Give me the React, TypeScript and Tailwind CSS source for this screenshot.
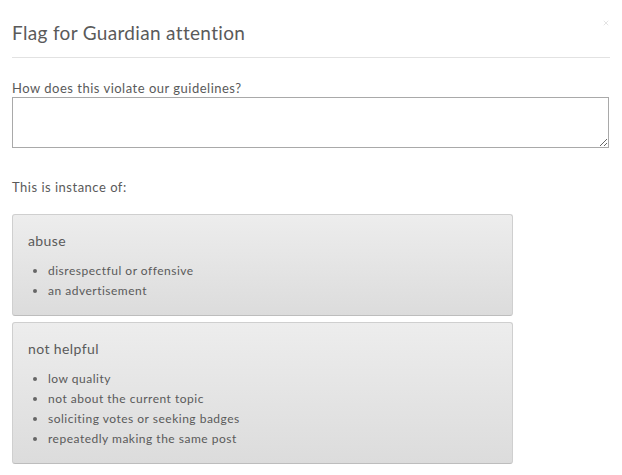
import { X } from "lucide-react";

const groups = [
    { title: "abuse", items: ["disrespectful or offensive", "an advertisement"] },
    {
        title: "not helpful",
        items: ["low quality", "not about the current topic", "soliciting votes or seeking badges", "repeatedly making the same post"],
    },
];

export default function App() {
    return (
        <div className="w-[622px] h-[475px] bg-white px-3 text-[#5a5a5a] font-['Lato',sans-serif] relative">
            <X className="absolute top-[19px] right-[12px] w-[8px] h-[8px] text-[#c8c8c8]" strokeWidth={1.5} />
            <h3 className="pt-[22px] pb-[13px] text-[19px] leading-[22px] tracking-[0.33px] border-b border-[#e2e2e2]">
                Flag for Guardian attention
            </h3>
            <label className="block mt-[22px] text-[13px] leading-[16px] tracking-[0.5px]">How does this violate our guidelines?</label>
            <textarea className="block mt-[1px] w-[597px] h-[51px] border border-[#a9a9a9] outline-none resize-y" />
            <p className="mt-[31px] text-[13px] leading-[16px] tracking-[0.5px]">This is instance of:</p>
            <div className="mt-[19px] flex flex-col gap-[6px] w-[501px]">
                {groups.map(group => (
                    <div key={group.title}
                        className="rounded-[3px] border border-[#cfcfcf] border-b-[#bdbdbd] bg-gradient-to-b from-[#ededed] to-[#dcdcdc] px-[15px] pt-[16px] pb-[14px]"
                    >
                        <div className="text-[14px] leading-[20px] tracking-[0.4px]">{group.title}</div>
                        <ul className="mt-[10px] pl-[20px] list-disc text-[12px] leading-[20px] tracking-[0.5px] marker:text-[#666]">
                            {group.items.map(item => (
                                <li key={item}>{item}</li>
                            ))}
                        </ul>
                    </div>
                ))}
            </div>
        </div>
    );
}
